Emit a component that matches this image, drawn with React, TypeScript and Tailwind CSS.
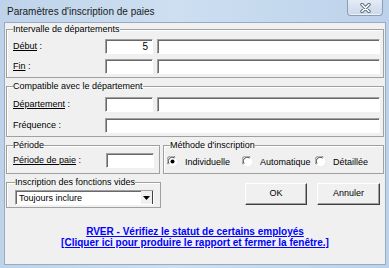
import type { ReactNode } from 'react';

const FONT = "font-['Liberation_Sans',Arial,sans-serif]";

const SUNKEN =
  'bg-white border border-t-[#a0a0a0] border-l-[#a0a0a0] border-r-white border-b-white shadow-[inset_1px_1px_0_#696969]';

function Group({ title, className, children }: { title: string; className: string; children: ReactNode }) {
  return (
    <fieldset className={`border border-[#a0a0a0] shadow-[inset_1px_1px_0_#ffffff] ${className}`}>
      <legend className="text-[9px] leading-[10px] text-black">{title}</legend>
      {children}
    </fieldset>
  );
}

function Field({ className = '', value = '', dark = false }: { className?: string; value?: string; dark?: boolean }) {
  return (
    <div
      className={`h-[15px] flex items-center justify-end pr-[4px] text-[10px] text-black ${SUNKEN} ${
        dark ? 'shadow-[inset_1px_1px_0_#202020]' : ''
      } ${className}`}
    >
      {value}
    </div>
  );
}

function Radio({ label, checked = false, className = '' }: { label: string; checked?: boolean; className?: string }) {
  return (
    <div className={`flex items-center gap-[7px] ${className}`}>
      <svg width="11" height="11" viewBox="0 0 11 11">
        <circle cx="5.5" cy="5.5" r="5" fill="#ffffff" />
        <path d="M1.2 8.3 A5 5 0 0 1 8.3 1.2" fill="none" stroke="#808080" strokeWidth="1" />
        <path d="M2 7.6 A4 4 0 0 1 7.6 2" fill="none" stroke="#404040" strokeWidth="1" />
        <path d="M9.8 2.7 A5 5 0 0 1 2.7 9.8" fill="none" stroke="#e8e8e8" strokeWidth="1" />
        {checked && <circle cx="5.5" cy="5.5" r="2" fill="#000000" />}
      </svg>
      <span className="text-[9px] leading-[10px] text-black">{label}</span>
    </div>
  );
}

export default function App() {
  return (
    <div
      className={`w-[389px] h-[268px] flex flex-col bg-[linear-gradient(90deg,#bed3ea_0%,#cddff1_45%,#bcd2ea_100%)] ${FONT}`}
    >
      {/* Title bar */}
      <div className="h-[22px] flex items-start justify-between shrink-0">
        <span className="pl-[7px] pt-[6px] text-[10px] leading-[12px] text-[#1b1b1b]">
          Paramètres d'inscription de paies
        </span>
        <div className="mr-[6px] w-[36px] h-[16px] rounded-b-[4px] border border-t-0 border-[#8a9db5] bg-[linear-gradient(180deg,#e4ecf5,#c9d8ea)] shadow-[inset_0_-1px_0_#eef3f9] flex items-center justify-center">
          <svg width="11" height="10" viewBox="0 0 11 10">
            <path d="M2 1.5 L9 8.5 M9 1.5 L2 8.5" stroke="#5c6b7e" strokeWidth="3.4" strokeLinecap="round" />
            <path d="M2 1.5 L9 8.5 M9 1.5 L2 8.5" stroke="#ffffff" strokeWidth="1.6" strokeLinecap="round" />
          </svg>
        </div>
      </div>

      {/* Client area */}
      <div className="ml-[4px] mr-[3px] h-[243px] border border-[#98abc2] bg-[#f0f0f0] flex flex-col px-[1px] pt-[1px]">
        <Group title="Intervalle de départements" className="pl-[6px] pr-[3px] pb-[3px]">
          <div className="flex flex-col gap-[5px] pt-[5px]">
            <div className="flex items-center">
              <span className="w-[92px] text-[9px] text-black">
                <span className="underline">Début</span> :
              </span>
              <Field className="w-[48px]" value="5" />
              <Field className="ml-[4px] w-[223px]" />
            </div>
            <div className="flex items-center">
              <span className="w-[92px] text-[9px] text-black">
                <span className="underline">Fin</span> :
              </span>
              <Field className="w-[48px]" />
              <Field className="ml-[4px] w-[223px]" />
            </div>
          </div>
        </Group>

        <Group title="Compatible avec le département" className="mt-[3px] pl-[6px] pr-[3px] pb-[3px]">
          <div className="flex flex-col gap-[6px] pt-[6px]">
            <div className="flex items-center">
              <span className="w-[92px] text-[9px] text-black">
                <span className="underline">Département</span> :
              </span>
              <Field className="w-[48px]" />
              <Field className="ml-[4px] w-[223px]" />
            </div>
            <div className="flex items-center">
              <span className="w-[92px] text-[9px] text-black">Fréquence :</span>
              <Field className="w-[275px]" dark />
            </div>
          </div>
        </Group>

        <div className="mt-[3px] flex">
          <Group title="Période" className="w-[154px] pl-[6px] pb-[4px]">
            <div className="flex items-center pt-[3px]">
              <span className="w-[93px] text-[9px] text-black">
                <span className="underline">Période de paie</span> :
              </span>
              <Field className="w-[48px]" />
            </div>
          </Group>
          <Group title="Méthode d'inscription" className="ml-[3px] flex-1 pl-[3px] pb-[4px] [&>legend]:ml-[3px]">
            <div className="flex items-center h-[15px] mt-[4px]">
              <Radio label="Individuelle" checked className="w-[75px]" />
              <Radio label="Automatique" className="w-[73px]" />
              <Radio label="Détaillée" />
            </div>
          </Group>
        </div>

        <div className="mt-[3px] flex items-start">
          <Group title="Inscription des fonctions vides" className="w-[155px] pl-[8px] pb-[2px]">
            <div className="pt-[3px]">
              <div className={`h-[15px] w-[139px] flex items-center ${SUNKEN}`}>
                <span className="flex-1 pl-[3px] text-[9px] leading-[10px] text-black">Toujours inclure</span>
                <div className="w-[12px] h-[13px] bg-[#f0f0f0] border-r border-[#404040] flex items-center justify-center">
                  <svg width="7" height="4" viewBox="0 0 7 4">
                    <path d="M0 0 H7 L3.5 4 Z" fill="#000000" />
                  </svg>
                </div>
              </div>
            </div>
          </Group>
          <div className="ml-[84px] mt-[6px] flex gap-[10px]">
            <button className="w-[62px] h-[22px] bg-[#f0f0f0] border border-t-white border-l-white border-r-[#404040] border-b-[#404040] shadow-[inset_-1px_-1px_0_#a0a0a0] text-[9px] text-black">
              OK
            </button>
            <button className="w-[63px] h-[22px] bg-[#f0f0f0] border border-t-white border-l-white border-r-[#404040] border-b-[#404040] shadow-[inset_-1px_-1px_0_#a0a0a0] text-[9px] text-black">
              Annuler
            </button>
          </div>
        </div>

        <div className="mt-[18px] flex flex-col items-center text-[10px] leading-[11px] font-bold text-[#0000ff] underline">
          <span>RVER - Vérifiez le statut de certains employés</span>
          <span>[Cliquer ici pour produire le rapport et fermer la fenêtre.]</span>
        </div>
      </div>
    </div>
  );
}
